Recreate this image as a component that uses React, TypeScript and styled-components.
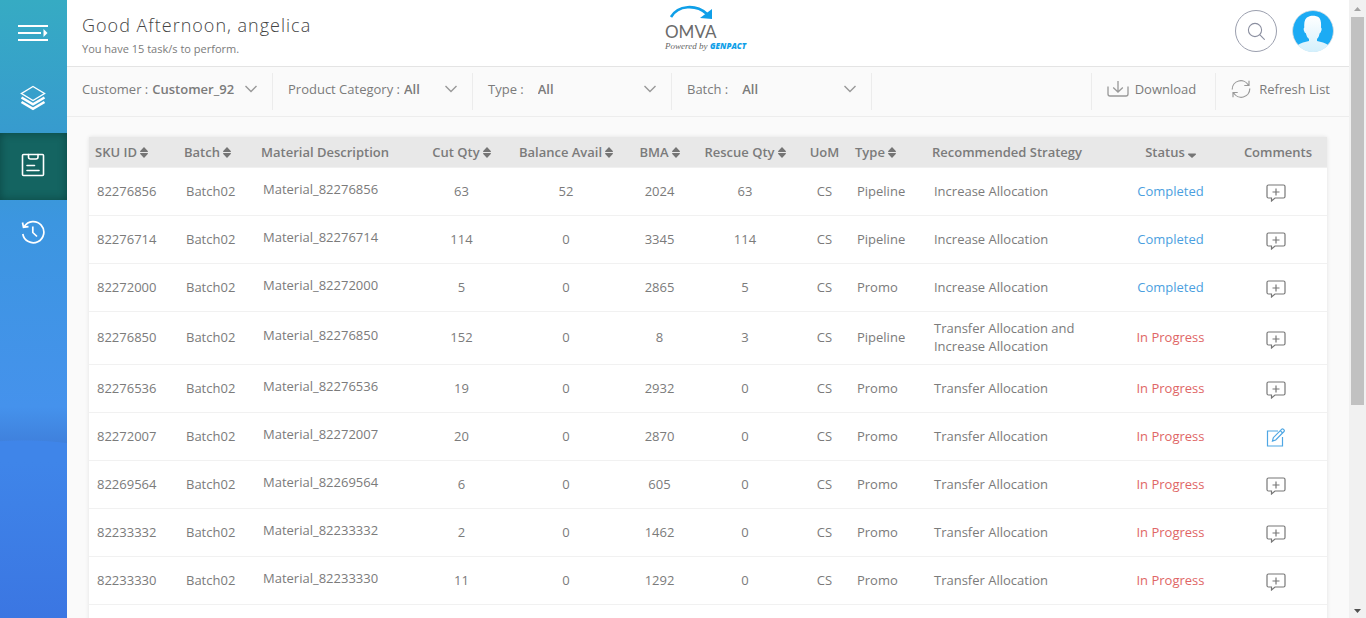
import React from "react";
import styled, { createGlobalStyle } from "styled-components";

const GlobalStyle = createGlobalStyle`
  * { box-sizing: border-box; }
  body { margin: 0; background: #fafafa; }
  body, button, select { font-family: "Open Sans", sans-serif; font-size: 13px; line-height: 18px; color: #7b7b7b; }
  svg { display: block; }
`;

const Shell = styled.div`
  display: grid;
  grid-template-columns: 67px minmax(0, 1fr) 17px;
  height: 100vh;
  overflow: hidden;
`;

const Sidebar = styled.nav`
  display: flex;
  flex-direction: column;
  overflow: hidden;
  background:
    radial-gradient(ellipse 90px 22px at 24px 22px, #3f85e9 96%, transparent 100%) 0 calc(100% - 156px) / 100% 22px no-repeat,
    linear-gradient(#3f85e9, #3b76e2) 0 100% / 100% 156px no-repeat,
    linear-gradient(#36abc3 0%, #379acf 30%, #3c96e0 48%, #4592ec 88%, #3f80dc 96%) 0 0 / 100% calc(100% - 156px) no-repeat;
`;

const NavButton = styled.button<{ $active?: boolean; $head?: boolean }>`
  display: flex;
  align-items: center;
  justify-content: center;
  height: ${(p) => (p.$head ? 66 : 67)}px;
  padding: ${(p) => (p.$head ? "0 1px 0 0" : "0 1px 3px 0")};
  border: 0;
  color: #fff;
  background: ${(p) => (p.$active ? "#146461" : "transparent")};
  box-shadow: ${(p) => (p.$active ? "inset 0 0 8px rgba(0, 40, 40, 0.5)" : "none")};
`;

const Main = styled.main`
  display: flex;
  flex-direction: column;
  overflow: hidden;
`;

const Header = styled.header`
  display: grid;
  grid-template-columns: 1fr auto 1fr;
  height: 67px;
  flex: none;
  padding: 0 15px;
  background: #fff;
  border-bottom: 1px solid #e4e4e4;
`;

const Greeting = styled.div`
  padding-top: 12px;
`;

const Title = styled.h1`
  margin: 0;
  font-size: 18px;
  line-height: 27px;
  font-weight: 300;
  letter-spacing: 1px;
  color: #444;
`;

const Subtitle = styled.p`
  margin: 0;
  padding-top: 2px;
  font-size: 11px;
  line-height: 16px;
`;

const Account = styled.div`
  display: flex;
  justify-content: flex-end;
  gap: 15px;
  padding-top: 10px;
`;

const RoundButton = styled.button<{ $outlined?: boolean }>`
  display: flex;
  align-items: center;
  justify-content: center;
  width: 42px;
  height: 42px;
  padding: 0;
  overflow: hidden;
  border: ${(p) => (p.$outlined ? "1px solid #9b9fae" : "0")};
  border-radius: 50%;
  background: transparent;
  color: #8b8fa0;
`;

const Toolbar = styled.div`
  display: flex;
  flex: none;
  height: 50px;
  padding: 6px 0;
  border-bottom: 1px solid #ededed;
`;

const Filter = styled.label<{ $width: number; $gap: number }>`
  display: flex;
  align-items: center;
  flex: 0 1 ${(p) => p.$width}px;
  gap: ${(p) => p.$gap}px;
  height: 37px;
  padding: 0 15px 5px;
  border-right: 1px solid #ececec;
  white-space: nowrap;
`;

const SelectWrap = styled.span`
  position: relative;
  display: flex;
  align-items: center;
  flex: 1;
  min-width: 0;
  svg {
    position: absolute;
    right: 0;
    pointer-events: none;
  }
`;

const Select = styled.select`
  width: 100%;
  appearance: none;
  padding: 0 14px 0 0;
  border: 0;
  background: transparent;
  font-weight: 600;
`;

const Actions = styled.div`
  display: flex;
  margin-left: auto;
`;

const ActionButton = styled.button<{ $gap: number }>`
  display: flex;
  align-items: center;
  gap: ${(p) => p.$gap}px;
  height: 37px;
  padding: 0 19px 5px 15px;
  border: 0;
  border-left: 1px solid #ececec;
  background: transparent;
  white-space: nowrap;
`;

const Content = styled.section`
  padding: 20px 22px;
`;

const Table = styled.table`
  width: 100%;
  table-layout: fixed;
  border-collapse: separate;
  border-spacing: 0;
  background: #fff;
  box-shadow: 0 0 4px rgba(0, 0, 0, 0.1);
`;

type Align = "left" | "center";

const HeadCell = styled.th<{ $align: Align }>`
  height: 31px;
  padding: 0 ${(p) => (p.$align === "left" ? 6 : 0)}px;
  text-align: ${(p) => p.$align};
  font-weight: 600;
  white-space: nowrap;
  background: #e8e8e8;
  border-bottom: 1px solid #f0f0f0;
`;

const SortButton = styled.button`
  display: inline-flex;
  align-items: center;
  gap: 3px;
  padding: 0;
  border: 0;
  background: transparent;
  font-weight: 600;
  vertical-align: top;
`;

const Cell = styled.td<{ $align?: Align }>`
  height: 48px;
  padding: 7px 8px 9px;
  text-align: ${(p) => p.$align || "left"};
  border-bottom: 1px solid #f1f1f1;
`;

const MaterialCell = styled(Cell)`
  padding: 5px 8px 11px;
`;

const CommentCell = styled(Cell)`
  padding: 9px 10px 7px 7px;
`;

const StatusText = styled.span<{ $done: boolean }>`
  color: ${(p) => (p.$done ? "#4b9fe0" : "#e06666")};
`;

const IconButton = styled.button`
  display: inline-flex;
  padding: 0;
  border: 0;
  background: transparent;
  vertical-align: middle;
`;

const Scrollbar = styled.div`
  display: flex;
  flex-direction: column;
  align-items: center;
  justify-content: space-between;
  padding: 7px 0 5px;
  background: #f1f1f1;
`;

const Thumb = styled.div`
  flex: 0 0 64%;
  width: 13px;
  margin: 6px 0 auto;
  background: #c1c1c1;
`;

const Chevron = () => (
  <svg width="12" height="8" viewBox="0 0 12 8" fill="none" stroke="#999" strokeWidth="1.4">
    <path d="M.5 1 6 6.6 11.5 1" />
  </svg>
);

const SortIcon = () => (
  <svg width="8" height="11" viewBox="0 0 8 11" fill="#757575">
    <path d="M4 0 8 4.2Q8 5 7.4 5H.6Q0 5 0 4.2ZM4 11 8 6.8Q8 6 7.4 6H.6Q0 6 0 6.8Z" />
  </svg>
);

const SortDownIcon = () => (
  <svg width="8" height="11" viewBox="0 0 8 11" fill="#757575">
    <path d="M4 11 8 7.4Q8 6.5 7.4 6.5H.6Q0 6.5 0 7.4Z" />
  </svg>
);

const MenuIcon = () => (
  <svg width="30" height="18" viewBox="0 0 30 18" fill="#fff">
    <path d="M0 1h30v2H0zM0 8h23v2H0zM0 15h30v2H0zM25.500 5 29.500 9 25.500 13z" />
  </svg>
);

const LayersIcon = () => (
  <svg width="26" height="26" viewBox="0 0 26 26" fill="none" stroke="#fff" strokeWidth="1.4">
    <path d="M13 1.500 24.500 8.500 13 15.500 1.500 8.500Z" />
    <path strokeWidth="2.600" d="M1.500 12.500 13 19.300 24.500 12.500M1.500 17 13 23.800 24.500 17" />
  </svg>
);

const TaskIcon = () => (
  <svg width="24" height="24" viewBox="0 0 24 24" fill="none" stroke="#fff" strokeWidth="1.6">
    <rect x="1.500" y="1.500" width="21" height="21" rx="1" />
    <path d="M7.500 1.500V4Q7.500 6 9.500 6h5.500Q17 6 17 4V1.500M6 12.500h7.500M6 17.500h12" strokeLinecap="round" />
  </svg>
);

const HistoryIcon = () => (
  <svg width="24" height="24" viewBox="0 0 24 24" fill="none" stroke="#fff" strokeWidth="1.700">
    <path d="M3.300 6.500A10.600 10.600 0 1 1 1.800 14M1.500 2.500 2.500 7.200 7.500 6.600M11.800 6.500V12.500L16 16.500" />
  </svg>
);

const Logo = () => (
  <svg width="88" height="56" viewBox="0 0 88 56" role="img" aria-label="OMVA Powered by Genpact">
    <path d="M7 17C14 5 32 4 43 14" fill="none" stroke="#0f9fe8" strokeWidth="2.600" />
    <path d="M48 9v10l-12-1Z" fill="#0f9fe8" />
    <text x="1" y="38" fontFamily="Lato" fontSize="17" fill="#6b6b6b">OMVA</text>
    <text x="1" y="49" fontFamily="Liberation Serif" fontStyle="italic" fontSize="9" fill="#666">Powered by</text>
    <text x="46" y="49" fontFamily="Open Sans" fontStyle="italic" fontWeight="800" fontSize="8" fill="#0f9fe8">GENPACT</text>
  </svg>
);

const SearchIcon = () => (
  <svg width="18" height="18" viewBox="0 0 18 18" fill="none" stroke="currentColor" strokeWidth="1.100">
    <circle cx="8" cy="8" r="6.600" />
    <path d="m12.700 12.700 5 5" />
  </svg>
);

const Avatar = () => (
  <svg width="42" height="42" viewBox="0 0 42 42">
    <defs>
      <linearGradient id="person" x1="0" y1="0" x2="0" y2="1">
        <stop offset="0" stopColor="#fff" />
        <stop offset="1" stopColor="#d2effc" />
      </linearGradient>
    </defs>
    <circle cx="21" cy="21" r="20.500" fill="#1cabf4" stroke="#d4dde2" />
    <path
      fill="url(#person)"
      d="M17 6.500C18 5.300 25 5.300 27 7.500Q29.500 10 29 17.500Q30.300 18.500 29 21.500Q28.500 23 27.800 23Q27 27 25 29V31C29 32 33 32.500 37 35.500A20 20 0 0 1 5 35.500C9 32.500 13 32 17 31V29Q14.500 27 13.700 23Q12.700 23 12.300 21.500Q11 18.500 12.300 17.500Q11.500 8 17 6.500Z"
    />
  </svg>
);

const DownloadIcon = () => (
  <svg width="22" height="18" viewBox="0 0 22 18" fill="none" stroke="#999" strokeWidth="1.300">
    <path d="M1 6.500V14Q1 16 3 16H19Q21 16 21 14V6.500M11 1V12M6.200 7.500 11 12 15.800 7.500" />
  </svg>
);

const RefreshIcon = () => (
  <svg width="20" height="20" viewBox="0 0 20 20" fill="none" stroke="#999" strokeWidth="1.200">
    <path d="M1.200 10.500A8.700 8.700 0 0 1 17.500 6.200M18.800 9.500A8.700 8.700 0 0 1 2.500 13.800M18 1.800V6.500H13.300M2 18.200V13.500H6.700" />
  </svg>
);

const CommentIcon = () => (
  <svg width="20" height="18" viewBox="0 0 20 18" fill="none" stroke="#777" strokeWidth="1.200">
    <path d="M2.500 1H17.500Q19 1 19 2.500V12.500Q19 14 17.500 14H9L5.500 17V14H2.500Q1 14 1 12.500V2.500Q1 1 2.500 1ZM10 4.500v7M6.500 8h7" />
  </svg>
);

const EditIcon = () => (
  <svg width="20" height="20" viewBox="0 0 20 20" fill="none" stroke="#4fa7e4" strokeWidth="1.200">
    <path d="M12 3H1.500V18H16.500V9M6.500 13 7.300 9.700 15.800 1.200Q16.500 .5 17.300 1.200L18 1.900Q18.700 2.700 18 3.500L9.700 12ZM14.300 2.700 16.600 5" />
  </svg>
);

const columns: { label: string; width: number; align: Align; sort?: "both" | "down" }[] = [
  { label: "SKU ID", width: 89, align: "left", sort: "both" },
  { label: "Batch", width: 77, align: "left", sort: "both" },
  { label: "Material Description", width: 165, align: "left" },
  { label: "Cut Qty", width: 83, align: "center", sort: "both" },
  { label: "Balance Avail", width: 126, align: "center", sort: "both" },
  { label: "BMA", width: 61, align: "center", sort: "both" },
  { label: "Rescue Qty", width: 110, align: "center", sort: "both" },
  { label: "UoM", width: 49, align: "center" },
  { label: "Type", width: 77, align: "left", sort: "both" },
  { label: "Recommended Strategy", width: 186, align: "left" },
  { label: "Status", width: 117, align: "center", sort: "down" },
  { label: "Comments", width: 98, align: "center" },
];

const Column = styled.col<{ $share: number }>`
  width: ${(p) => p.$share}%;
`;

const totalWidth = columns.reduce((sum, c) => sum + c.width, 0);

type Row = [sku: string, cut: number, balance: number, bma: number, rescue: number, type: string, strategy: string, done?: boolean, noted?: boolean];

const rows: Row[] = [
  ["82276856", 63, 52, 2024, 63, "Pipeline", "Increase Allocation", true],
  ["82276714", 114, 0, 3345, 114, "Pipeline", "Increase Allocation", true],
  ["82272000", 5, 0, 2865, 5, "Promo", "Increase Allocation", true],
  ["82276850", 152, 0, 8, 3, "Pipeline", "Transfer Allocation and Increase Allocation"],
  ["82276536", 19, 0, 2932, 0, "Promo", "Transfer Allocation"],
  ["82272007", 20, 0, 2870, 0, "Promo", "Transfer Allocation", false, true],
  ["82269564", 6, 0, 605, 0, "Promo", "Transfer Allocation"],
  ["82233332", 2, 0, 1462, 0, "Promo", "Transfer Allocation"],
  ["82233330", 11, 0, 1292, 0, "Promo", "Transfer Allocation"],
];

const filters = [
  { label: "Customer :", value: "Customer_92", width: 206, gap: 4 },
  { label: "Product Category :", value: "All", width: 200, gap: 4 },
  { label: "Type :", value: "All", width: 199, gap: 14 },
  { label: "Batch :", value: "All", width: 200, gap: 14 },
];

export default function App() {
  return (
    <>
      <GlobalStyle />
      <Shell>
        <Sidebar>
          <NavButton aria-label="Menu" $head><MenuIcon /></NavButton>
          <NavButton aria-label="Layers"><LayersIcon /></NavButton>
          <NavButton aria-label="Tasks" $active><TaskIcon /></NavButton>
          <NavButton aria-label="History"><HistoryIcon /></NavButton>
        </Sidebar>
        <Main>
          <Header>
            <Greeting>
              <Title>Good Afternoon, angelica</Title>
              <Subtitle>You have 15 task/s to perform.</Subtitle>
            </Greeting>
            <Logo />
            <Account>
              <RoundButton $outlined aria-label="Search"><SearchIcon /></RoundButton>
              <RoundButton aria-label="Account"><Avatar /></RoundButton>
            </Account>
          </Header>
          <Toolbar>
            {filters.map((f) => (
              <Filter key={f.label} $width={f.width} $gap={f.gap}>
                {f.label}
                <SelectWrap>
                  <Select defaultValue={f.value}><option>{f.value}</option></Select>
                  <Chevron />
                </SelectWrap>
              </Filter>
            ))}
            <Actions>
              <ActionButton $gap={6}><DownloadIcon />Download</ActionButton>
              <ActionButton $gap={8}><RefreshIcon />Refresh List</ActionButton>
            </Actions>
          </Toolbar>
          <Content>
            <Table>
              <colgroup>
                {columns.map((c) => <Column key={c.label} $share={(c.width / totalWidth) * 100} />)}
              </colgroup>
              <thead>
                <tr>
                  {columns.map((c) => (
                    <HeadCell key={c.label} $align={c.align} scope="col">
                      {c.sort ? (
                        <SortButton>{c.label}{c.sort === "both" ? <SortIcon /> : <SortDownIcon />}</SortButton>
                      ) : c.label}
                    </HeadCell>
                  ))}
                </tr>
              </thead>
              <tbody>
                {rows.map(([sku, cut, balance, bma, rescue, type, strategy, done, noted]) => (
                  <tr key={sku}>
                    <Cell>{sku}</Cell>
                    <Cell>Batch02</Cell>
                    <MaterialCell>{"Material_" + sku}</MaterialCell>
                    <Cell $align="center">{cut}</Cell>
                    <Cell $align="center">{balance}</Cell>
                    <Cell $align="center">{bma}</Cell>
                    <Cell $align="center">{rescue}</Cell>
                    <Cell $align="center">CS</Cell>
                    <Cell>{type}</Cell>
                    <Cell>{strategy}</Cell>
                    <Cell $align="center">
                      <StatusText $done={!!done}>{done ? "Completed" : "In Progress"}</StatusText>
                    </Cell>
                    <CommentCell $align="center">
                      <IconButton aria-label={noted ? "Edit comment" : "Add comment"}>
                        {noted ? <EditIcon /> : <CommentIcon />}
                      </IconButton>
                    </CommentCell>
                  </tr>
                ))}
                <tr>{columns.map((c) => <Cell key={c.label} />)}</tr>
              </tbody>
            </Table>
          </Content>
        </Main>
        <Scrollbar aria-hidden="true">
          <svg width="7" height="4" viewBox="0 0 7 4" fill="#a3a3a3"><path d="M0 4 3.500 0 7 4Z" /></svg>
          <Thumb />
          <svg width="7" height="4" viewBox="0 0 7 4" fill="#505050"><path d="M0 0H7L3.500 4Z" /></svg>
        </Scrollbar>
      </Shell>
    </>
  );
}
